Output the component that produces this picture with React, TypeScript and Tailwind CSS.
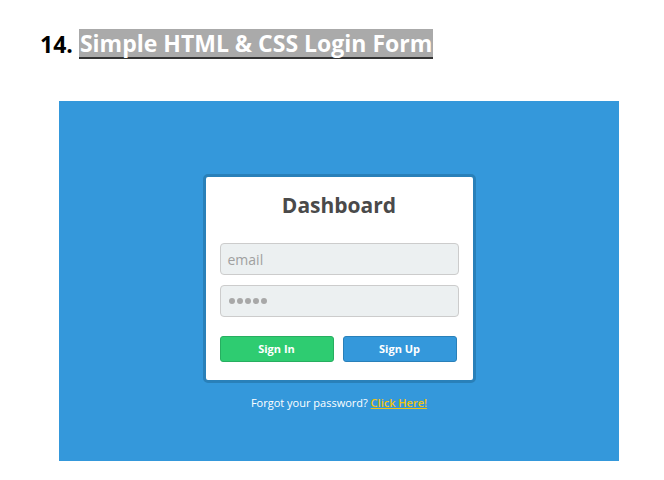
export default function App() {
  return (
    <div className="h-[480px] w-[664px] bg-white font-['Open_Sans',sans-serif]">
      <div className="pl-[40px] pt-[29px]">
        <h2 className="flex items-center text-[23px] font-bold leading-[28px] text-black">
          <span className="mr-[6px]">14.</span>
          <span className="border-b-2 border-[#333] bg-[#aaaaaa] px-[1px] text-white">
            Simple HTML &amp; CSS Login Form
          </span>
        </h2>
      </div>

      <div className="ml-[59px] mt-[42px] flex h-[360px] w-[560px] flex-col items-center bg-[#3498db] pt-[73px]">
        <div className="w-[273px] rounded-[5px] border-[3px] border-[#2980b9] bg-white px-[14px] pb-[18px] pt-[12px]">
          <h1 className="text-center text-[21px] font-bold leading-[32px] text-[#4a4a4a]">Dashboard</h1>
          <div className="mt-[22px] flex flex-col gap-[10px]">
            <div className="flex h-[32px] items-center rounded-[4px] border border-[#cccccc] bg-[#ecf0f1] px-[7px] text-[14px] text-[#a0a0a0]">
              email
            </div>
            <div className="flex h-[32px] items-center gap-[2px] rounded-[4px] border border-[#cccccc] bg-[#ecf0f1] px-[8px]">
              {[0, 1, 2, 3, 4].map((i) => (
                <span key={i} className="h-[6px] w-[6px] rounded-full bg-[#a8a8a8]" />
              ))}
            </div>
          </div>
          <div className="mt-[19px] flex gap-[9px]">
            <button className="h-[26px] w-[114px] rounded-[3px] border border-[#27ae60] bg-[#2ecc71] text-[11px] font-bold text-white">
              Sign In
            </button>
            <button className="h-[26px] w-[114px] rounded-[3px] border border-[#2980b9] bg-[#3498db] text-[11px] font-bold text-white">
              Sign Up
            </button>
          </div>
        </div>
        <p className="mt-[12px] text-[11px] text-white">
          Forgot your password?{' '}
          <a className="font-semibold text-[#f1c40f] underline">Click Here!</a>
        </p>
      </div>
    </div>
  );
}
